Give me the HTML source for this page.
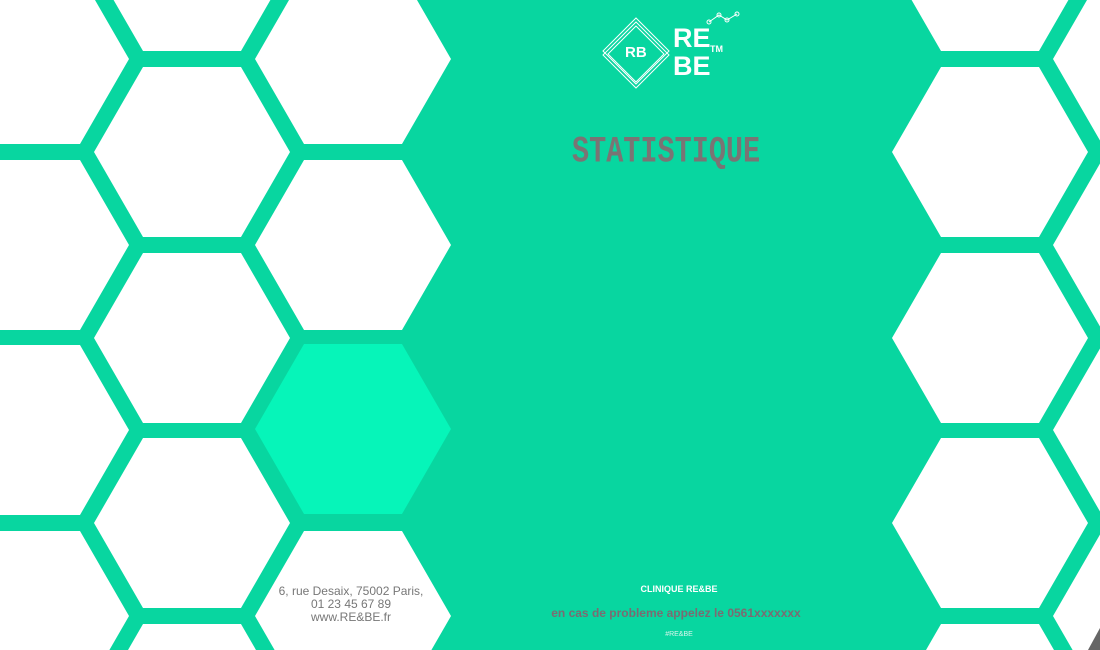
<!DOCTYPE html>
<html><head><meta charset="utf-8"><style>
html,body{margin:0;padding:0;width:1100px;height:650px;overflow:hidden;background:#08d6a0;font-family:"Liberation Sans",sans-serif;position:relative}
.t{position:absolute;white-space:nowrap}
</style></head><body>
<svg width="1100" height="650" style="position:absolute;left:0;top:0">
<defs><polygon id="h" points="-98,0 -49,-85 49,-85 98,0 49,85 -49,85"/></defs>
<g fill="#fff">
<use href="#h" x="31" y="59"/><use href="#h" x="31" y="245"/><use href="#h" x="31" y="430"/><use href="#h" x="31" y="616"/>
<use href="#h" x="192" y="-34"/><use href="#h" x="192" y="152"/><use href="#h" x="192" y="338"/><use href="#h" x="192" y="523"/><use href="#h" x="192" y="709"/>
<use href="#h" x="353" y="59"/><use href="#h" x="353" y="245"/><use href="#h" x="353" y="616"/>
<use href="#h" x="990" y="-34"/><use href="#h" x="990" y="152"/><use href="#h" x="990" y="338"/><use href="#h" x="990" y="523"/><use href="#h" x="990" y="709"/>
<use href="#h" x="1151" y="59"/><use href="#h" x="1151" y="245"/><use href="#h" x="1151" y="430"/><use href="#h" x="1151" y="616"/>
</g>
<use href="#h" x="353" y="429" fill="#06f5b9"/>
<polygon points="1100,628 1100,650 1088,650" fill="#666"/>
<g fill="none" stroke="#fff" stroke-width="1">
<polygon points="636,18 669,51 636,84 603,51"/>
<polygon points="636,22 669,55 636,88 603,55"/>
<polygon points="636,26 664,54 636,82 608,54"/>
<polyline points="709,22 719,15 727,20 737,14"/>
<circle cx="709" cy="22" r="2"/><circle cx="719" cy="15" r="2"/><circle cx="727" cy="20" r="2"/><circle cx="737" cy="14" r="2"/>
</g>
</svg>
<div class="t" style="left:625px;top:44px;font-size:15px;font-weight:bold;color:#fff">RB</div>
<div class="t" style="left:673px;top:24px;font-size:27px;font-weight:bold;color:#fff;line-height:28px">RE<br>BE</div>
<div class="t" style="left:710px;top:44px;font-size:9px;font-weight:bold;color:#fff">TM</div>
<div class="t" style="left:572px;top:137px;font-family:'Liberation Mono',monospace;font-weight:bold;font-size:28.5px;color:#7a7474;transform:scaleY(1.3);transform-origin:0 0;line-height:24px">STATISTIQUE</div>
<div class="t" style="left:240px;width:222px;top:585px;text-align:center;font-size:12px;color:#777;line-height:13px">6, rue Desaix, 75002 Paris,<br>01 23 45 67 89<br>www.RE&amp;BE.fr</div>
<div class="t" style="left:579px;width:200px;top:584px;text-align:center;font-size:9px;font-weight:bold;color:#fff">CLINIQUE RE&amp;BE</div>
<div class="t" style="left:526px;width:300px;top:606px;text-align:center;font-size:12px;font-weight:bold;color:#7a6c72">en cas de probleme appelez le 0561xxxxxxx</div>
<div class="t" style="left:579px;width:200px;top:631px;text-align:center;font-size:7px;color:#d8f5ec">#RE&amp;BE</div>
</body></html>
